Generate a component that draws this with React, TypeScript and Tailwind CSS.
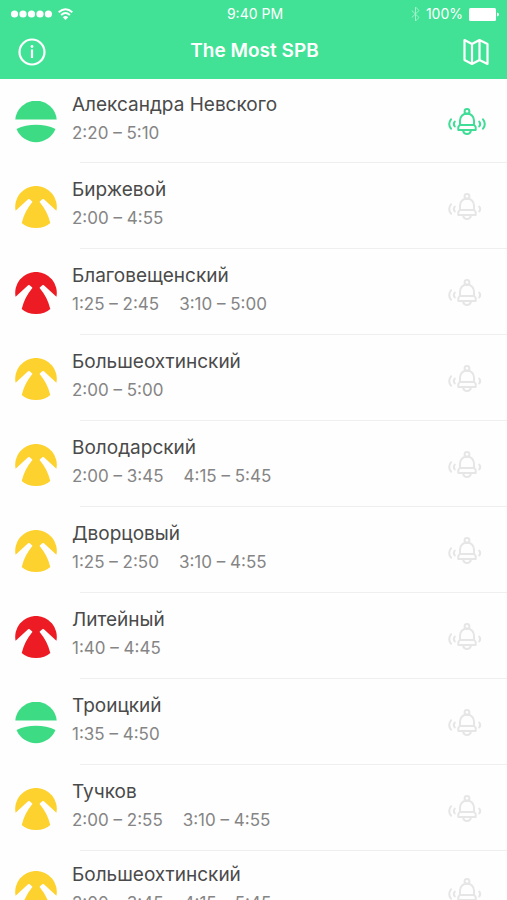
import React from "react";
import { clsx } from "clsx";

type Status = "closed" | "soon" | "open";

interface Bridge {
  name: string;
  times: string[];
  status: Status;
  alarm?: boolean;
}

const bridges: Bridge[] = [
  { name: "Александра Невского", times: ["2:20 – 5:10"], status: "closed", alarm: true },
  { name: "Биржевой", times: ["2:00 – 4:55"], status: "soon" },
  { name: "Благовещенский", times: ["1:25 – 2:45", "3:10 – 5:00"], status: "open" },
  { name: "Большеохтинский", times: ["2:00 – 5:00"], status: "soon" },
  { name: "Володарский", times: ["2:00 – 3:45", "4:15 – 5:45"], status: "soon" },
  { name: "Дворцовый", times: ["1:25 – 2:50", "3:10 – 4:55"], status: "soon" },
  { name: "Литейный", times: ["1:40 – 4:45"], status: "open" },
  { name: "Троицкий", times: ["1:35 – 4:50"], status: "closed" },
  { name: "Тучков", times: ["2:00 – 2:55", "3:10 – 4:55"], status: "soon" },
  { name: "Большеохтинский", times: ["2:00 – 3:45", "4:15 – 5:45"], status: "soon" },
];

function BridgeIcon({ status }: { status: Status }) {
  if (status === "closed") {
    return (
      <svg viewBox="0 0 42 42" className="size-[42px] shrink-0 text-[#3ddc84]" fill="currentColor" aria-hidden="true">
        <path d="M.3 18.4A20.8 20.8 0 0 1 41.7 18.4Z" />
        <path d="M1.5 28Q10.5 23.800 21 23.800T40.500 28A21 21 0 0 1 1.500 28Z" />
      </svg>
    );
  }
  return (
    <svg
      viewBox="0 0 42 42"
      className={clsx("size-[42px] shrink-0", status === "soon" ? "text-[#fdd22f]" : "text-[#ed1c24]")}
      fill="currentColor"
      aria-hidden="true"
    >
      <path d="M.6 24.800A20.800 20.800 0 1 1 41.400 24.800L28.900 13.300Q28.200 12.600 27.300 13.300L25 15.200Q24.400 15.900 25 16.600Q32.500 25.500 35.300 37Q30 42 21 42T6.700 37Q9.500 25.500 17 16.600Q17.600 15.900 17 15.200L14.700 13.300Q13.800 12.600 13.100 13.300Z" />
    </svg>
  );
}

function BellIcon({ active }: { active?: boolean }) {
  return (
    <svg
      viewBox="0 0 38 28"
      className={clsx("h-7 w-[38px]", active ? "text-[#3fdd96]" : "text-[#e6e6e6]")}
      fill="none"
      stroke="currentColor"
      strokeWidth="2"
      strokeLinejoin="round"
      strokeLinecap="round"
      aria-hidden="true"
    >
      <circle cx="19" cy="3.500" r="2.400" />
      <path d="M12 16.500v-4a7 7 0 0 1 14 0v4l1.700 2.500v3H10.300v-3zM12 17h14M15.200 23a3.900 3.900 0 0 0 7.600 0" />
      <path d="M6.800 13.500q-2 2.500 0 5M31.200 13.500q2 2.500 0 5" />
      <path d="M3 11.300q-3.600 4.700 0 9.400" />
      {active && <path d="M35 11.300q3.600 4.700 0 9.400" />}
    </svg>
  );
}

function StatusBar() {
  return (
    <div className="grid h-7 grid-cols-3 items-center pr-2 pl-[11px] text-sm leading-4">
      <div className="flex items-center gap-1.5">
        <svg viewBox="0 0 41 8" className="h-2 w-[41px]" fill="currentColor" aria-label="Signal">
          <circle cx="3.500" cy="4" r="3.600" />
          <circle cx="12" cy="4" r="3.600" />
          <circle cx="20.500" cy="4" r="3.600" />
          <circle cx="29" cy="4" r="3.600" />
          <circle cx="37.400" cy="4" r="3.600" />
        </svg>
        <svg viewBox="0 0 15 12" className="h-3 w-[15px]" fill="none" stroke="currentColor" strokeWidth="1.900" aria-label="Wi-Fi">
          <path d="M.7 4.300q6.800-6 13.600 0M3.100 7q4.400-4 8.800 0" />
          <path d="M4.800 9.200q2.700-2.200 5.400 0L7.500 12Z" fill="currentColor" stroke="none" />
        </svg>
      </div>
      <span className="text-center">9:40 PM</span>
      <div className="flex items-center justify-end gap-1.5">
        <svg viewBox="0 0 9 16" className="h-4 w-[9px] opacity-50" fill="none" stroke="currentColor" aria-label="Bluetooth">
          <path d="M.8 4.500 8 11.500 4.500 15V1L8 4.500.8 11.500" />
        </svg>
        <span>100%</span>
        <svg viewBox="0 0 30 13" className="h-[13px] w-[30px]" fill="currentColor" aria-label="Battery">
          <rect width="27" height="13" rx="1.500" />
          <path d="M28 4.500q2 .3 2 2t-2 2z" />
        </svg>
      </div>
    </div>
  );
}

export default function App() {
  return (
    <div className="flex h-screen flex-col overflow-hidden bg-[#fefefe] font-[Inter,'Noto_Sans',sans-serif]">
      <header className="h-[79px] shrink-0 bg-[#41e296] text-white">
        <StatusBar />
        <div className="flex items-center justify-between px-4 pt-2">
          <button type="button" aria-label="Information" className="flex size-8 items-center justify-center">
            <svg viewBox="0 0 28 28" className="size-7" fill="none" stroke="currentColor" strokeWidth="2.200">
              <circle cx="14" cy="14" r="12.500" />
              <path d="M14 11.500V20" />
              <circle cx="14" cy="8.500" r="1.400" fill="currentColor" stroke="none" />
            </svg>
          </button>
          <h1 className="pb-0.5 text-[19px] leading-6 font-semibold">The Most SPB</h1>
          <button type="button" aria-label="Map" className="flex h-8 w-[30px] items-center justify-center">
            <svg viewBox="0 0 26 28" className="h-7 w-[26px]" fill="none" stroke="currentColor" strokeWidth="2.200" strokeLinejoin="round">
              <path d="M1.500 2 9 6l7.500-4 8 4v20l-8-4L9 26l-7.500-4zM9 6v20M16.500 2v20" />
            </svg>
          </button>
        </div>
      </header>
      <ul className="min-h-0 flex-1 overflow-y-auto [scrollbar-width:none]">
        {bridges.map((bridge, i) => (
          <li key={i} className="flex h-[86px] flex-col first:h-[84px] last:h-20">
            <div className="flex flex-1 items-center pt-0.5 pr-[21px] pl-[15px]">
              <BridgeIcon status={bridge.status} />
              <div className="ml-[15px] flex-1 pb-1.5">
                <h2 className="text-[19px] leading-7 text-[#4a4a4a]">{bridge.name}</h2>
                <p className="flex gap-5 text-[17px] leading-7 text-[#858585]">
                  {bridge.times.map((time) => (
                    <span key={time}>{time}</span>
                  ))}
                </p>
              </div>
              <button type="button" aria-label={`Alarm: ${bridge.name}`} aria-pressed={!!bridge.alarm}>
                <BellIcon active={bridge.alarm} />
              </button>
            </div>
            {i < bridges.length - 1 && <hr className="ml-20 border-[#efefef]" />}
          </li>
        ))}
      </ul>
    </div>
  );
}
